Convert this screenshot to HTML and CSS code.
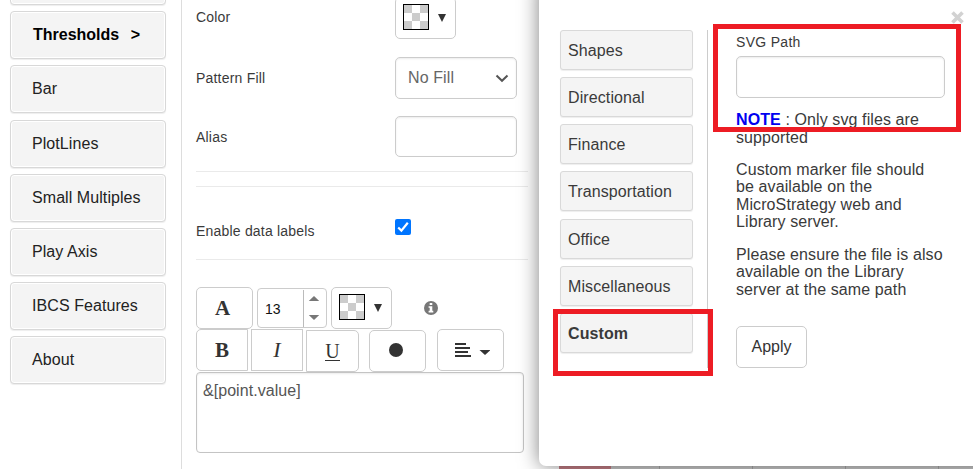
FILE: index.html
```html
<!DOCTYPE html>
<html lang="en">
<head>
<meta charset="utf-8">
<title>Thresholds</title>
<link rel="stylesheet" href="styles.css">
</head>
<body>
<div class="app">
  <nav class="side">
    <a class="side-item"></a>
    <a class="side-item active">Thresholds <span class="arrow">&gt;</span></a>
    <a class="side-item">Bar</a>
    <a class="side-item">PlotLines</a>
    <a class="side-item">Small Multiples</a>
    <a class="side-item">Play Axis</a>
    <a class="side-item">IBCS Features</a>
    <a class="side-item">About</a>
  </nav>
  <main class="form">
    <div class="row row-color">
      <span class="label">Color</span>
      <button class="picker"><span class="swatch"></span><span class="tri"></span></button>
    </div>
    <div class="row row-pattern">
      <span class="label">Pattern Fill</span>
      <div class="field select">No Fill
        <svg width="14" height="10" viewBox="0 0 14 10"><path d="M1.5 2.5 L7 7.8 L12.5 2.5" fill="none" stroke="#555" stroke-width="2"/></svg>
      </div>
    </div>
    <div class="row row-alias">
      <span class="label">Alias</span>
      <div class="field alias"></div>
    </div>
    <div class="rule"></div>
    <div class="row row-check">
      <span class="label">Enable data labels</span>
      <svg class="check" width="16" height="16" viewBox="0 0 16 16"><rect width="16" height="16" rx="2" fill="#0075ff"/><path d="M3.2 8.5 L6.4 11.6 L12.8 3.8" fill="none" stroke="#fff" stroke-width="2.2"/></svg>
    </div>
    <div class="tools tools-top">
      <button class="tool font-btn">A</button>
      <div class="number"><span class="num">13</span><span class="spin">
        <svg width="12" height="26" viewBox="0 0 12 26"><path d="M.8 6 L6 1 L11.2 6Z M.8 20 L6 25 L11.2 20Z" fill="#777"/></svg></span></div>
      <button class="picker"><span class="swatch"></span><span class="tri"></span></button>
      <svg class="info" width="14" height="14" viewBox="0 0 14 14"><circle cx="7" cy="7" r="7" fill="#777"/><path d="M5.7 2h2.6v2H5.7z M4.6 5.2h3.7v4.5h1v1.7H4.6V9.7h1.1V6.8H4.6z" fill="#fff"/></svg>
    </div>
    <div class="tools tools-bottom">
      <button class="tool bold">B</button>
      <button class="tool italic">I</button>
      <button class="tool under"><span>U</span></button>
      <button class="tool dot"><svg width="14" height="14"><circle cx="7" cy="7" r="7" fill="#333"/></svg></button>
      <button class="tool align"><svg width="35" height="14" viewBox="0 0 35 14"><path d="M0 1h11M0 5h15M0 9h13M0 13h16" stroke="#333" stroke-width="2"/><path d="M24.5 7h11L30 12z" fill="#333"/></svg></button>
    </div>
    <div class="textarea">&amp;[point.value]</div>
  </main>
  <div class="backdrop-grid"><i></i><b></b><b></b><b></b><b></b></div>
  <section class="popup">
    <div class="shapes">
      <a class="shape">Shapes</a>
      <a class="shape">Directional</a>
      <a class="shape">Finance</a>
      <a class="shape">Transportation</a>
      <a class="shape">Office</a>
      <a class="shape">Miscellaneous</a>
      <a class="shape chosen">Custom</a>
    </div>
    <div class="detail">
      <label class="path-label">SVG Path</label>
      <div class="field path"></div>
      <p class="note"><strong>NOTE</strong> : Only svg files are<br>supported</p>
      <p>Custom marker file should<br>be available on the<br>MicroStrategy web and<br>Library server.</p>
      <p>Please ensure the file is also<br>available on the Library<br>server at the same path</p>
      <button class="apply">Apply</button>
    </div>
    <svg class="close" width="13" height="13" viewBox="0 0 13 13"><path d="M1.5 1.5l10 10M11.5 1.5l-10 10" stroke="#d2d2d2" stroke-width="3.6"/></svg>
  </section>
  <div class="mark mark-path"></div>
  <div class="mark mark-custom"></div>
</div>
</body>
</html>
```
FILE: styles.css
```css
* { box-sizing: border-box; }
body {
  margin: 0;
  background: #fff;
  font: 16px "Liberation Sans", Arial, sans-serif;
  color: #3a3a3a;
}
button { font: inherit; color: #333; background: #fff; padding: 0; margin: 0; }
svg { display: block; flex: none; }
.app { position: relative; width: 973px; height: 469px; overflow: hidden; display: flex; }

.side {
  width: 182px;
  height: 469px;
  flex: none;
  border-right: 1px solid #ddd;
  padding: 0 15px 0 10px;
  display: flex;
  flex-direction: column;
  gap: 6.2px;
  overflow: hidden;
}
.side-item {
  height: 48px;
  flex: none;
  border: 1px solid #d8d8d8;
  border-radius: 4px;
  background: #f4f4f4;
  box-shadow: inset 0 0 0 1px #fff, 0 1px 1px #eee;
  padding-left: 21px;
  line-height: 45px;
  color: #222;
  letter-spacing: .07px;
}
.side-item:first-child { margin-top: -43px; }
.side-item.active { font-weight: bold; color: #000; padding-left: 22px; letter-spacing: 0; }
.arrow { margin-left: 7px; }

.form { width: 357px; padding: 0 0 0 14px; flex: none; }
.row { display: flex; width: 332px; }
.label { width: 199px; font-size: 14px; line-height: 16px; letter-spacing: .2px; }
.row-color { margin-top: -3px; height: 60px; }
.row-color .label { padding-top: 12px; }
.row-pattern { height: 59px; }
.row-pattern .label { padding-top: 13px; }
.row-alias { height: 56px; border-bottom: 1px solid #eaeaea; margin-bottom: 14px; }
.row-alias .label { padding-top: 13px; }
.rule { width: 332px; height: 1px; margin-top: 0; background: #eaeaea; }
.row-check { height: 73px; border-bottom: 1px solid #eaeaea; }
.row-check .label { padding-top: 36px; }
.check { margin-top: 32px; }
.picker {
  width: 61px;
  height: 42px;
  border: 1px solid #ccc;
  border-radius: 5px;
  display: flex;
  padding: 6px 0 0 7px;
}
.swatch {
  width: 26px;
  height: 26px;
  border: 1px solid #000;
  background: conic-gradient(#ccc 25%, #fff 0 50%, #ccc 0 75%, #fff 0) 8px 0 / 16px 16px;
}
.tri {
  width: 8px;
  height: 8px;
  margin: 10px 0 0 9px;
  background: #333;
  clip-path: polygon(0 0, 100% 0, 50% 100%);
}
.field {
  border: 1px solid #ccc;
  border-radius: 5px;
  box-shadow: inset 0 1px 2px rgba(0, 0, 0, .08);
  background: #fff;
}
.select {
  width: 122px;
  height: 42px;
  padding: 0 7px 0 12px;
  display: flex;
  align-items: center;
  justify-content: space-between;
  line-height: 40px;
  color: #666;
  letter-spacing: .1px;
}
.alias { width: 122px; height: 41px; }

.tools { display: flex; height: 42px; }
.tools-top { margin-top: 27px; }
.tool {
  height: 42px;
  border: 1px solid #ccc;
  border-radius: 5px;
  display: flex;
  align-items: center;
  justify-content: center;
  font-family: "Liberation Serif", serif;
  font-size: 21px;
}
.font-btn { width: 57px; font-weight: bold; margin-right: 4px; padding-right: 4px; }
.number {
  width: 70px;
  height: 40px;
  border: 1px solid #ccc;
  border-radius: 4px;
  margin: 1px 4px 0 0;
  display: flex;
  color: #111;
}
.num { width: 45px; padding-left: 7px; font-size: 14px; line-height: 40px; }
.spin { flex: 1; height: 37px; margin-top: 1px; border-left: 1px solid #bbb; padding: 5px 0 0 4px; }
.info { margin: 14px 0 0 32px; }
.tools-bottom { height: 43px; }
.bold { width: 52px; font-weight: bold; border-radius: 5px 0 0 5px; margin-right: 3px; }
.italic { width: 52px; font-style: italic; font-size: 22px; border-radius: 0; margin-right: 3px; }
.under { width: 53px; margin: 1px 10px 0 0; border-radius: 0 5px 5px 0; font-size: 20px; }
.under span { border-bottom: 1px solid #333; line-height: 18px; }
.dot { width: 57px; margin: 1px 11px 0 0; padding: 0 4px 2px 0; }
.align { width: 67px; padding-left: 3px; }
.textarea {
  width: 328px;
  height: 81px;
  border: 1px solid #c4c4c4;
  border-radius: 4px;
  box-shadow: inset 0 1px 2px rgba(0, 0, 0, .08);
  padding: 9px 6px;
  line-height: 18px;
  color: #555;
  letter-spacing: .05px;
}

.backdrop-grid {
  position: absolute;
  left: 559px;
  right: 0;
  bottom: 0;
  height: 3px;
  background: #ccc;
  display: flex;
}
.backdrop-grid i { width: 52px; background: #c78088; }
.backdrop-grid b { width: 93px; border-right: 1px solid #aaa; flex: none; }
.backdrop-grid i + b { width: 49px; }
.popup {
  position: absolute;
  left: 539px;
  top: -20px;
  width: 460px;
  height: 486px;
  background: #fff;
  border-radius: 7px;
  box-shadow: 0 0 20px rgba(0, 0, 0, .5);
  padding: 50px 0 0 21px;
  display: flex;
  align-items: flex-start;
}
.shapes {
  width: 148px;
  height: 338px;
  border-right: 1px solid #ccc;
  display: flex;
  flex-direction: column;
  gap: 7.15px;
}
.shape {
  width: 133px;
  height: 40px;
  flex: none;
  background: #f4f4f4;
  border: 1px solid #d9d9d9;
  border-radius: 3px;
  box-shadow: 0 1px 1px #eee;
  padding-left: 7px;
  line-height: 39px;
  letter-spacing: .1px;
}
.chosen { font-weight: bold; }
.detail { width: 209px; margin-left: 28px; padding-top: 4px; }
.path-label { display: block; font-size: 14px; line-height: 16px; letter-spacing: .3px; }
.path { height: 42px; margin: 6px 0 13px; }
.detail p { margin: 0 0 14.5px; line-height: 17.6px; letter-spacing: .1px; white-space: nowrap; }
.detail strong { color: #0000f0; }
.apply { width: 71px; height: 42px; border: 1px solid #ccc; border-radius: 5px; margin-top: 13px; }
.close { position: absolute; left: 412px; top: 31px; }

.mark { position: absolute; border: 5px solid #ed1c24; }
.mark-path { left: 713px; top: 24px; width: 248px; height: 108px; }
.mark-custom { left: 553px; top: 309px; width: 160px; height: 67px; }
```
